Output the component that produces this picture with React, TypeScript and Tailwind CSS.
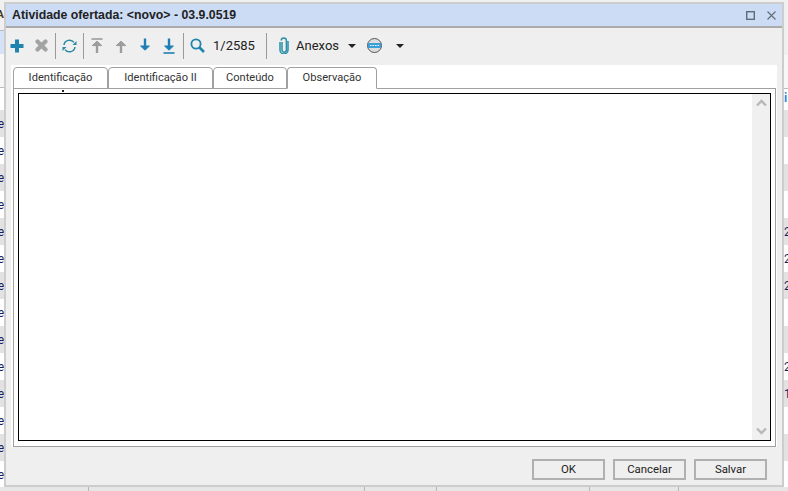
const leftRows = ["e", "e", "e", "e", "e", "e", "e", "e", "e", "e", "e", "e", "e", "e"];
const rightRows = ["", "", "", "", "2", "2", "2", "", "", "2", "1", "", "", ""];

function Caret() {
  return <span className="w-0 h-0 border-x-[4px] border-x-transparent border-t-[4px] border-t-[#222]" />;
}

function Sep() {
  return <span className="w-px h-[26px] bg-[#9a9a9a]" />;
}

function Arrow({ dir, bar, color }: { dir: "up" | "down"; bar?: boolean; color: string }) {
  const up = dir === "up";
  return (
    <svg width="14" height="16" viewBox="0 0 14 16" fill="none" stroke={color}>
      {up ? (
        <>
          <path d="M7 15V4" strokeWidth="2.4" />
          <path d="M7 3.2 2.2 7.6h9.6z" fill={color} strokeWidth="1" strokeLinejoin="round" />
          {bar && <path d="M1.5 1h11" strokeWidth="1.6" />}
        </>
      ) : (
        <>
          <path d="M7 0.5V10" strokeWidth="2.4" />
          <path d="M7 12.2 2.6 8h8.8z" fill={color} strokeWidth="1" strokeLinejoin="round" />
          {bar && <path d="M1.5 15h11" strokeWidth="1.6" />}
        </>
      )}
    </svg>
  );
}

function Tab({ label, width, active }: { label: string; width: string; active?: boolean }) {
  return (
    <div
      className={
        width +
        " h-[22px] flex items-center justify-center border border-[#a0a0a0] rounded-t-[4px] text-[11.1px] text-[#333] bg-white " +
        (active ? "border-b-white z-10" : "")
      }
    >
      {label}
    </div>
  );
}

export default function App() {
  return (
    <div className="relative w-[788px] h-[491px] overflow-hidden bg-[#f0f0f0] font-['Roboto',sans-serif]">
      {/* lista por tras do dialogo */}
      <div className="h-[487px] flex justify-between overflow-hidden">
        <div className="w-[4px] text-[12px] text-[#1a1a5e]">
          <div className="h-[30px] bg-[#f0f0f0] flex items-center justify-end text-[#4a3a20] text-[11px] font-bold">A</div>
          <div className="h-[24px] bg-[#d5e2f7] border-t border-[#bbbbbb]" />
          <div className="h-[33px] bg-[#f7f7f7]" />
          <div className="h-[23px] bg-white border-t border-[#bbbbbb]" />
          {leftRows.map((t, i) => (
            <div key={i} className={"h-[27px] flex items-center justify-end " + (i % 2 === 0 ? "bg-[#e2e2e2]" : "bg-white")}>
              {t}
            </div>
          ))}
        </div>
        <div className="w-[4px] text-[12px] text-[#1a1a5e]">
          <div className="h-[55px]" />
          <div className="h-[33px] bg-[#f7f7f7]" />
          <div className="h-[22px] bg-white border-t border-[#bbbbbb] text-[#1e88e5] font-bold">i</div>
          {rightRows.map((t, i) => (
            <div key={i} className={"h-[27px] flex items-center " + (i % 2 === 0 ? "bg-[#e2e2e2]" : "bg-white")}>
              {t}
            </div>
          ))}
        </div>
      </div>
      <div className="h-[4px] flex bg-[#e6e6e6]">
        <div className="w-[89px] border-r border-[#b5b5b5]" />
        <div className="w-[276px] border-r border-[#b5b5b5]" />
        <div className="w-[72px] border-r border-[#b5b5b5]" />
        <div className="w-[153px] border-r border-[#b5b5b5]" />
        <div className="w-[89px] border-r border-[#b5b5b5]" />
      </div>

      {/* dialogo */}
      <div className="absolute left-[4px] top-[2px] w-[780px] h-[485px] bg-[#efefef] border-2 border-[#cdcdcd] flex flex-col">
        <div className="h-[24px] shrink-0 bg-[#cddcf5] border-b-2 border-[#ababab] flex items-center justify-between pl-[6px] pr-[6px]">
          <span className="font-['Liberation_Sans',sans-serif] text-[12.3px] font-bold text-[#222]">
            Atividade ofertada: &lt;novo&gt; - 03.9.0519
          </span>
          <div className="flex items-center gap-[12px]">
            <svg width="9" height="9" viewBox="0 0 9 9" fill="none" stroke="#5f6b78" strokeWidth="1.4">
              <rect x="0.7" y="0.7" width="7.6" height="7.6" />
            </svg>
            <svg width="9" height="9" viewBox="0 0 9 9" fill="none" stroke="#5f6b78" strokeWidth="1.1">
              <path d="M0.5 0.5l8 8M8.5 0.5l-8 8" />
            </svg>
          </div>
        </div>

        <div className="h-[37px] shrink-0 flex items-center pl-[4px] pb-[2px] text-[13px] text-[#222]">
          <svg width="14" height="14" viewBox="0 0 14 14" fill="none" stroke="#1f84ad" strokeWidth="4">
            <path d="M7 0.5v13M0.5 7h13" />
          </svg>
          <svg width="13" height="13" viewBox="0 0 13 13" fill="none" stroke="#a3a3a3" strokeWidth="4.2" strokeLinecap="round" className="ml-[11px]">
            <path d="M2.5 2.5l8 8M10.5 2.5l-8 8" />
          </svg>
          <span className="ml-[7px] flex"><Sep /></span>
          <svg width="15" height="14" viewBox="0 0 15 14" fill="none" stroke="#2a8a9e" strokeWidth="1.5" className="ml-[6px]">
            <path d="M2 6a5.6 5.6 0 0 1 10-2.6" />
            <path d="M13 8a5.6 5.6 0 0 1-10 2.6" />
            <path d="M14.5 2v4h-4zM0.5 12V8h4z" fill="#2a8a9e" stroke="none" />
          </svg>
          <span className="ml-[6px] flex"><Sep /></span>
          <span className="ml-[6px] flex"><Arrow dir="up" bar color="#9c9c9c" /></span>
          <span className="ml-[10px] flex"><Arrow dir="up" color="#9c9c9c" /></span>
          <span className="ml-[10px] flex"><Arrow dir="down" color="#1f7fb5" /></span>
          <span className="ml-[10px] flex"><Arrow dir="down" bar color="#1f7fb5" /></span>
          <span className="ml-[7px] flex"><Sep /></span>
          <svg width="15" height="15" viewBox="0 0 15 15" fill="none" stroke="#1f84ad" className="ml-[6px]">
            <circle cx="6" cy="6" r="4.6" strokeWidth="1.8" />
            <path d="M9.5 9.5l4.5 4.5" strokeWidth="2.6" />
          </svg>
          <span className="ml-[8px] w-[40px]">1/2585</span>
          <span className="ml-[13px] flex"><Sep /></span>
          <svg width="10" height="17" viewBox="0 0 10 17" fill="none" stroke="#2a8fa8" strokeWidth="1.5" className="ml-[12px]">
            <path d="M3 5v8a2.2 2.2 0 0 0 4.4 0V3.6a2.6 2.6 0 0 0-5.2 0" />
            <path d="M1 5v8a4 4 0 0 0 8 0V4" />
          </svg>
          <span className="ml-[7px] w-[42px]">Anexos</span>
          <span className="ml-[10px] flex"><Caret /></span>
          <svg width="15" height="15" viewBox="0 0 15 15" className="ml-[11px]">
            <circle cx="7.5" cy="7.5" r="7" fill="#dddddd" stroke="#555555" />
            <rect x="1" y="5" width="13" height="5" fill="#3aa0dc" />
            <path d="M3 7.5h9" stroke="#ffffff" strokeDasharray="1.5 1" />
          </svg>
          <span className="ml-[14px] flex"><Caret /></span>
        </div>

        <div className="relative flex-1 min-h-0 bg-white ml-[5px] mr-[5px] flex flex-col pl-[2px] pt-[2px] pr-[1px]">
          <div className="flex h-[22px] -mb-px">
            <Tab label="Identificação" width="w-[95px]" />
            <Tab label="Identificação II" width="w-[105px]" />
            <Tab label="Conteúdo" width="w-[74px]" />
            <Tab label="Observação" width="w-[90px]" active />
          </div>
          <div className="flex-1 min-h-0 border border-[#a0a0a0] bg-white pt-[4px] px-[4px] pb-[5px]">
            <div className="h-full border border-black flex justify-end">
              <div className="w-[18px] h-full bg-[#f0f0f0] flex flex-col items-center justify-between py-[5px]">
                <svg width="11" height="8" viewBox="0 0 11 8" fill="none" stroke="#b8b8b8" strokeWidth="2.4">
                  <path d="M1 6.5l4.5-4.5 4.5 4.5" />
                </svg>
                <svg width="11" height="8" viewBox="0 0 11 8" fill="none" stroke="#b8b8b8" strokeWidth="2.4">
                  <path d="M1 1.5l4.5 4.5 4.5-4.5" />
                </svg>
              </div>
            </div>
          </div>
          <span className="absolute left-[51px] top-[25px] w-[2px] h-[2px] bg-[#222]" />
        </div>

        <div className="h-[38px] shrink-0 flex items-start justify-end gap-[8px] pt-[12px] pr-[15px] text-[11.4px] text-[#222]">
          <button className="w-[73px] h-[21px] border-2 border-[#b0b0b0] bg-[#efefef]">OK</button>
          <button className="w-[73px] h-[21px] border-2 border-[#b0b0b0] bg-[#efefef]">Cancelar</button>
          <button className="w-[73px] h-[21px] border-2 border-[#b0b0b0] bg-[#efefef]">Salvar</button>
        </div>
      </div>
    </div>
  );
}
